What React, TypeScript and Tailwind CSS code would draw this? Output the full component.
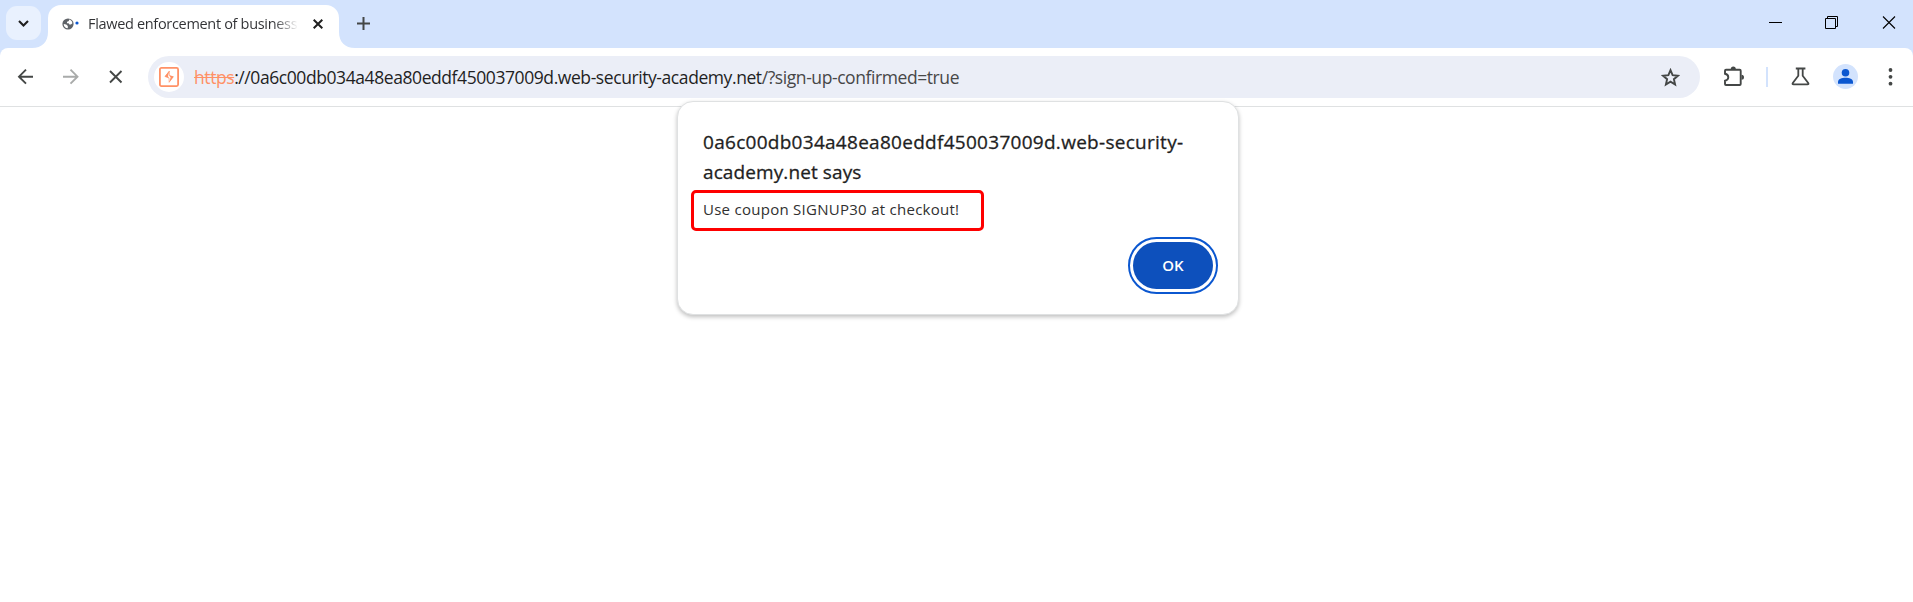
import React from "react";

const ICON = "shrink-0 block";

function WindowControls() {
  return (
    <div className="ml-auto flex items-start">
      <svg className={ICON} width="153" height="48" fill="none" stroke="#000">
        <path d="M9 22.5H22" />
        <path d="M65.5 18.5h10v10h-10zM67.5 18v-1.500h10v10h-2" />
        <path d="M123 16.500l12 12M135 16.500l-12 12" strokeWidth="1.100" />
      </svg>
    </div>
  );
}

function TabStrip() {
  return (
    <div className="flex h-12 bg-[#d3e3fd]">
      <button className="mt-1.5 ml-1.5 flex h-[34px] w-[35px] items-center justify-center rounded-[11px] bg-[#e9f1fe]">
        <svg width="11" height="7" fill="none" stroke="#1f1f1f" strokeWidth="2.100">
          <path d="M1 1l4.500 4.500L10 1" />
        </svg>
      </button>
      <svg className="ml-[-9px] mt-auto shrink-0" width="16" height="16">
        <path d="M16 0v16H0C10 16 16 10 16 0z" fill="#fff" />
      </svg>
      <div className="mt-[5px] flex w-[291px] items-center rounded-t-[13px] bg-white pb-[6px] pl-[14px]">
        <svg className={ICON} width="17" height="12">
          <circle cx="6" cy="6" r="5.600" fill="#5f6368" />
          <path d="M1.700 6l2.600.6 1.500 1.300v2.400C3.300 10.200 1.700 8.500 1.700 6zM7 1.600c1.900.4 3.200 1.600 3.400 3.700L9 6.600H7.400L6.600 5.200H4.900L5.100 3.700 6.900 3z" fill="#fff" />
          <circle cx="15" cy="5" r="1.600" fill="#0b57d0" />
        </svg>
        <div className="ml-[9px] w-[210px] overflow-hidden whitespace-nowrap bg-gradient-to-r from-[#303134] from-88% to-white bg-clip-text font-['Open_Sans'] text-[14.500px] leading-5 tracking-[-0.32px] text-transparent">
          Flawed enforcement of business
        </div>
        <svg className="ml-[15px] shrink-0" width="10" height="10" fill="none" stroke="#1f1f1f" strokeWidth="2">
          <path d="M.7.7l8.600 8.600M9.300.7L.7 9.300" />
        </svg>
      </div>
      <svg className="mt-auto shrink-0" width="16" height="16">
        <path d="M0 0v16h16C6 16 0 10 0 0z" fill="#fff" />
      </svg>
      <svg className="mt-[17px] ml-[2px] shrink-0" width="13" height="13" stroke="#444746" strokeWidth="2">
        <path d="M6.500 0v13M0 6.500h13" />
      </svg>
      <WindowControls />
    </div>
  );
}

function Toolbar() {
  return (
    <div className="bg-[#d3e3fd]">
      <div className="flex h-[59px] items-start rounded-t-lg bg-white pt-2 shadow-[inset_0_-1px_0_#dfe1e2]">
        <svg className={ICON} width="148" height="42" fill="none" stroke="#444746" strokeWidth="1.900">
          <path d="M33 20.700H19.500M26 13.700l-7 7 7 7" />
          <path d="M63 20.700h14M70.500 13.700l7 7-7 7" stroke="#a9abaa" />
          <path d="M110 15l11.500 11.500M121.500 15L110 26.500" />
        </svg>
        <div className="flex h-[42px] w-[1552px] items-center rounded-full bg-[#ebeef7] pl-1.5">
          <div className="flex size-[30px] items-center justify-center rounded-full bg-white">
            <svg width="20" height="20" fill="none" stroke="#ff9166">
              <rect x=".9" y=".9" width="18.200" height="18.200" rx="1.500" strokeWidth="1.800" />
              <path d="M10.400 4v4.800l3.700 1.100-4 5.400v-4.200L6.200 9.600z" strokeWidth=".6" />
              <path d="M10.400 3.800L5.600 9.500l4.500 1.600L9 9.200zM10.100 15.600l4.700-6-4.400-1.300 1.200 2.200z" fill="#ff9166" stroke="none" />
            </svg>
          </div>
          <div className="ml-2.5 whitespace-nowrap font-['Open_Sans'] text-[17.500px] tracking-[-0.42px] text-[#1f1f1f]">
            <span className="text-[#ff9166] line-through">https</span>
            <span>://0a6c00db034a48ea80eddf450037009d.web-security-academy.net</span>
            <span className="text-[#474747]">/?sign-up-confirmed=true</span>
          </div>
          <svg className="mr-5 ml-auto shrink-0" width="19" height="19" viewBox="0 0 19 19" fill="none" stroke="#444746" strokeWidth="1.900">
            <path d="M9.500 2.200l2.100 5 5.400.5-4.100 3.500 1.200 5.400-4.600-2.900-4.600 2.900 1.200-5.400L2 7.700l5.400-.5z" />
          </svg>
        </div>
        <svg className={ICON} width="213" height="42" fill="none" stroke="#444746" strokeWidth="2">
          <path d="M26 13.800h13.700q1 0 1 1v13.200q0 1-1 1H26q-1 0-1-1v-3.300c4.400-1 4.400-6 0-7v-2.900q0-1 1-1z" strokeWidth="1.900" />
          <path d="M30.800 13a2.500 2.500 0 015 0zM41.500 18.700a2.500 2.500 0 010 5z" fill="#444746" stroke="none" />
          <path d="M67 11v20" stroke="#d3e3fd" />
          <path d="M95.800 12.500h9.600M98.300 13v6.800l-5.500 7.200q-.8 1.300.7 1.300h14q1.500 0 .7-1.300l-5.500-7.200V13" strokeWidth="1.800" />
          <circle cx="145.500" cy="20.500" r="12.500" fill="#d3e3fd" stroke="none" />
          <circle cx="145.500" cy="16.700" r="3.800" fill="#0b57d0" stroke="none" />
          <path d="M138 27.800v-2c0-5.500 15-5.500 15 0v2z" fill="#0b57d0" stroke="none" />
          <g fill="#444746" stroke="none">
            <circle cx="190.500" cy="14" r="1.900" />
            <circle cx="190.500" cy="20.800" r="1.900" />
            <circle cx="190.500" cy="27.700" r="1.900" />
          </g>
        </svg>
      </div>
    </div>
  );
}

function AlertDialog() {
  return (
    <div role="alertdialog" className="absolute top-[101px] left-[677px] flex h-[214px] w-[562px] flex-col rounded-[16px] border border-[#dfe1e2] bg-white px-[25px] pt-[25px] font-['Open_Sans'] text-[#1f1f1f] shadow-[0_2px_4px_rgba(0,0,0,0.25)]">
      <h1 className="whitespace-nowrap text-[19px] leading-[30px] font-medium tracking-[0.28px] [-webkit-text-stroke:0.3px_#1f1f1f]">
        0a6c00db034a48ea80eddf450037009d.web-security-<br />
        <span className="tracking-[0.1px]">academy.net says</span>
      </h1>
      <div className="mt-[3px] -ml-3 flex h-[41px] w-[293px] items-center rounded-[5px] border-3 border-[#fe0000] pb-0.5 pl-[9px] text-[15px] tracking-[0.27px] whitespace-nowrap text-[#303030]">
        Use coupon SIGNUP30 at checkout!
      </div>
      <button className="mt-[6px] mr-[-5px] flex h-[57px] w-[90px] items-center justify-center self-end rounded-full border-2 border-[#0b57d0] bg-white p-[3px]">
        <span className="flex h-full w-full items-center justify-center rounded-full bg-[#0d50bc] text-[15px] font-semibold text-white">OK</span>
      </button>
    </div>
  );
}

export default function App() {
  return (
    <main className="relative h-[602px] w-[1913px] overflow-hidden bg-white">
      <TabStrip />
      <Toolbar />
      <AlertDialog />
    </main>
  );
}
